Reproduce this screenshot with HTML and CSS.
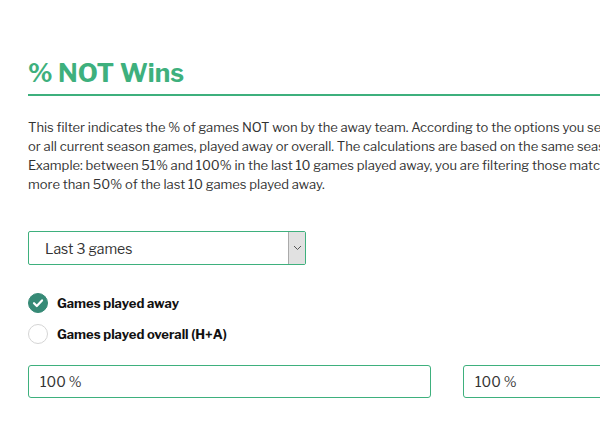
FILE: index.html
```html
<!DOCTYPE html>
<html lang="en">
<head>
    <meta charset="UTF-8">
    <meta name="viewport" content="width=device-width, initial-scale=1.0">
    <title>% NOT Wins</title>
    <link rel="stylesheet" href="styles.css">
</head>
<body>

    <div class="filter">
        <h2 class="filter-title">% NOT Wins</h2>

        <p class="filter-text">
            This filter indicates the % of games NOT won by the away team. According to the options you select, the percentage is calculated over the last games<br>
            or all current season games, played away or overall. The calculations are based on the same season's matches.<br>
            Example: between 51% and 100% in the last 10 games played away, you are filtering those matches where the away team did not win<br>
            more than 50% of the last 10 games played away.
        </p>

        <div class="select-box">
            <span class="select-value">Last 3 games</span>
            <span class="select-arrow">
                <svg width="9" height="6" viewBox="0 0 9 6"><path d="M1 1 L4.5 4.5 L8 1" fill="none" stroke="#555" stroke-width="1"/></svg>
            </span>
        </div>

        <div class="options">
            <label class="option">
                <span class="radio checked">
                    <svg width="12" height="10" viewBox="0 0 12 10"><path d="M2 5.2 L4.8 8 L10 2.4" fill="none" stroke="#fff" stroke-width="2.2" stroke-linecap="round" stroke-linejoin="round"/></svg>
                </span>
                Games played away
            </label>
            <label class="option">
                <span class="radio"></span>
                Games played overall (H+A)
            </label>
        </div>

        <div class="range">
            <div class="range-input">100 %</div>
            <div class="range-input">100 %</div>
        </div>
    </div>

</body>
</html>
```

FILE: styles.css
```css
body {
    margin: 0;
    padding: 0;
    background: #fff;
    font-family: "Libre Franklin", "Inter", "Noto Sans", sans-serif;
    color: #333;
    overflow: hidden;
}

.filter {
    width: 840px;
    padding: 58px 0 0 28px;
}

.filter-title {
    margin: 0;
    padding-bottom: 6px;
    font-size: 26px;
    font-weight: 700;
    line-height: 30px;
    color: #3eb07d;
    border-bottom: 2px solid #3eb07d;
}

.filter-text {
    margin: 22px 0 0 0;
    font-size: 13px;
    line-height: 19px;
    white-space: nowrap;
    color: #333;
}

.select-box {
    display: flex;
    align-items: stretch;
    width: 276px;
    height: 32px;
    margin-top: 37px;
    border: 1px solid #3eb07d;
    border-radius: 2px;
}

.select-value {
    flex: 1;
    display: flex;
    align-items: center;
    padding-left: 16px;
    font-size: 14px;
    color: #333;
}

.select-arrow {
    width: 16px;
    display: flex;
    align-items: center;
    justify-content: center;
    background: #e1e1e1;
    border-left: 1px solid #aaa;
}

.options {
    display: flex;
    flex-direction: column;
    gap: 11px;
    margin-top: 28px;
}

.option {
    display: flex;
    align-items: center;
    gap: 9px;
    font-size: 13px;
    line-height: 20px;
    font-weight: 700;
    color: #111;
}

.radio {
    width: 20px;
    height: 20px;
    box-sizing: border-box;
    border-radius: 50%;
    border: 1px solid #d5d5d5;
    display: flex;
    align-items: center;
    justify-content: center;
}

.radio.checked {
    background: #368a76;
    border-color: #368a76;
}

.range {
    display: grid;
    grid-template-columns: 403px 403px;
    gap: 32px;
    margin-top: 21px;
}

.range-input {
    height: 31px;
    line-height: 31px;
    padding-left: 11px;
    border: 1px solid #3eb07d;
    border-radius: 3px;
    font-size: 14px;
    color: #333;
}
```
